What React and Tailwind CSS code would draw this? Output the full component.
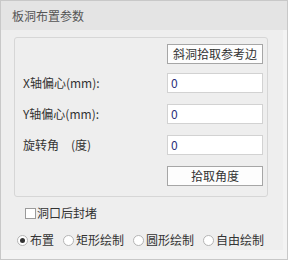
import React from 'react';

const FONT = { fontFamily: '"Noto Sans CJK SC", "Noto Sans", sans-serif' };

const Field = ({ label, value }) => (
  <div className="flex items-center justify-between h-[20px]">
    <span className="text-[12px] leading-none text-[#333]">{label}</span>
    <div className="w-[96px] h-[20px] bg-white border border-[#d2d2d2] flex items-center pl-[3px] text-[12px] leading-none text-[#2a2f7a]">
      {value}
    </div>
  </div>
);

const PickButton = ({ children }) => (
  <div className="flex justify-end">
    <button className="w-[96px] h-[20px] bg-[#fdfdfd] border border-[#a6a6a6] text-[12px] leading-none text-[#333] flex items-center justify-center">
      {children}
    </button>
  </div>
);

const Radio = ({ label, checked }) => (
  <label className="flex items-center gap-[2px]">
    <span className="w-[11px] h-[11px] rounded-full bg-white border border-[#b4b4b4] flex items-center justify-center">
      {checked && <span className="w-[5px] h-[5px] rounded-full bg-[#333]" />}
    </span>
    <span className="text-[12px] leading-none text-[#333]">{label}</span>
  </label>
);

export default function App() {
  return (
    <div style={FONT} className="w-[288px] h-[260px] bg-[#f3f3f3] border border-[#c8c8c8] flex flex-col">
      <div className="h-[29px] bg-[#e4e4e4] flex items-center pl-[11px] text-[12px] text-[#555]">
        板洞布置参数
      </div>

      <div className="w-[282px] h-[220px] bg-[#eeeeee] pl-[13px] pt-[7px]">
        <div className="w-[254px] h-[160px] border border-[#d6d6d6] rounded-[3px] pl-[8px] pr-[4px] pt-[6px] flex flex-col">
          <PickButton>斜洞拾取参考边</PickButton>
          <div className="mt-[9px] flex flex-col gap-[11px]">
            <Field label="X轴偏心(mm):" value="0" />
            <Field label="Y轴偏心(mm):" value="0" />
            <Field label="旋转角　(度)" value="0" />
            <PickButton>拾取角度</PickButton>
          </div>
        </div>

        <label className="mt-[10px] ml-[11px] flex items-center gap-[1px]">
          <span className="w-[11px] h-[11px] bg-white border border-[#9a9a9a]" />
          <span className="text-[12px] leading-none text-[#333]">洞口后封堵</span>
        </label>

        <div className="mt-[15px] ml-[3px] flex items-center gap-[9px]">
          <Radio label="布置" checked />
          <Radio label="矩形绘制" />
          <Radio label="圆形绘制" />
          <Radio label="自由绘制" />
        </div>
      </div>
    </div>
  );
}
